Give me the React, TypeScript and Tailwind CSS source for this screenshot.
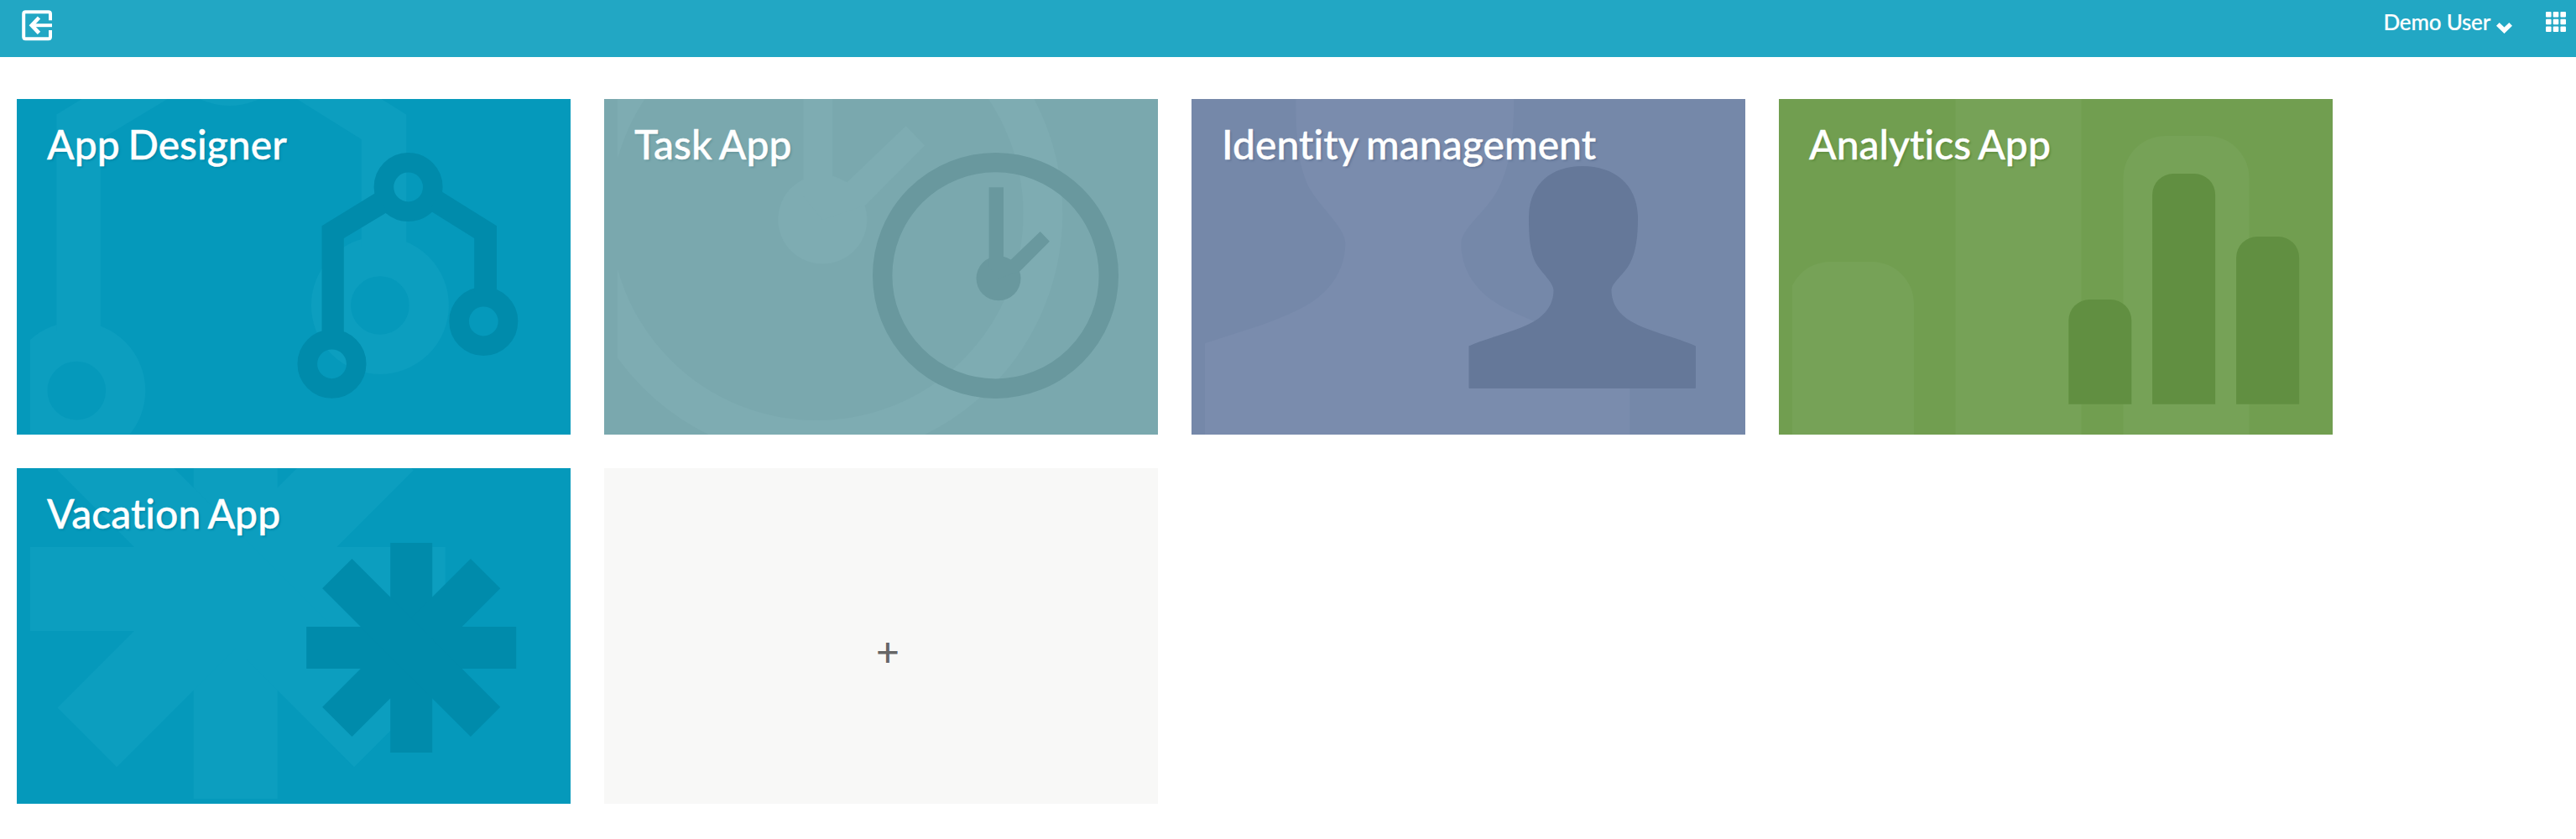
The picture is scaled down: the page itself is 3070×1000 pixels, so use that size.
import type { ReactNode } from "react";

type Tile = {
  title: string;
  bg: string;
  light: string;
  dark: string;
  shadow: string;
  icon: ReactNode;
};

const flow = (
  <>
    <g fill="none" stroke="currentColor" strokeWidth="23.6">
      <circle cx="466.6" cy="105" r="29.2" />
      <circle cx="375.5" cy="315.8" r="29.2" />
      <circle cx="556.3" cy="265" r="29.2" />
    </g>
    <path d="M363.500 280V151.300L427 112.200L442 134.600L389.800 166V280Z" />
    <path d="M545.200 230V166L492 132.800L505 109.400L572 151.300V230Z" />
  </>
);

const clock = (
  <>
    <circle cx="466.5" cy="210.4" r="134.8" fill="none" stroke="currentColor" strokeWidth="23.4" />
    <circle cx="470" cy="213.8" r="26.5" />
    <path d="M458.600 105.300H476V188L484.500 191.700L519.700 158L530.900 169.700L495.600 205.300L470 214L458.600 200Z" />
  </>
);

const person = (
  <path d="M466 80C505 80 532 103 532 142C532 165 529.5 182 523 195C516 209 500.5 219 500.5 228C500.5 239 505 252 519 262C541 277 579 284 601 294.5V344Q601 345 600 345H331.500Q330.500 345 330.500 344V294.500C352 284 391 277 413 262C427 252 431.500 239 431.500 228C431.500 219 417 207 410 195C403.500 182 402 165 402 142C402 103 427 80 466 80Z" />
);

const bars = (
  <path d="M345.300 264a25 25 0 0 1 25 -25h25a25 25 0 0 1 25 25V363.700h-75ZM445.100 114a25 25 0 0 1 25 -25h25a25 25 0 0 1 25 25V363.700h-75ZM545.100 189a25 25 0 0 1 25 -25h25a25 25 0 0 1 25 25V363.700h-75Z" />
);

const arm = { x: 445.2, y: 89, width: 50, height: 250 };
const asterisk = (
  <>
    <rect {...arm} />
    <rect {...arm} transform="rotate(45 470.2 214)" />
    <rect {...arm} transform="rotate(90 470.2 214)" />
    <rect {...arm} transform="rotate(135 470.2 214)" />
  </>
);

const tiles: Tile[] = [
  { title: "App Designer", bg: "bg-[#0599bb]", light: "text-[#0c9ebf]", dark: "text-[#008bab]", shadow: "[text-shadow:2px_2px_2px_#008bab]", icon: flow },
  { title: "Task App", bg: "bg-[#7aa8ae]", light: "text-[#7eacb2]", dark: "text-[#69989e]", shadow: "[text-shadow:2px_2px_2px_#69989e]", icon: clock },
  { title: "Identity management", bg: "bg-[#7588a9]", light: "text-[#7a8cad]", dark: "text-[#657899]", shadow: "[text-shadow:2px_2px_2px_#657899]", icon: person },
  { title: "Analytics App", bg: "bg-[#719e50]", light: "text-[#76a257]", dark: "text-[#618f41]", shadow: "[text-shadow:2px_2px_2px_#618f41]", icon: bars },
  { title: "Vacation App", bg: "bg-[#0599bb]", light: "text-[#0c9ebf]", dark: "text-[#008bab]", shadow: "[text-shadow:2px_2px_2px_#008bab]", icon: asterisk },
];

function AppTile({ title, bg, light, dark, shadow, icon }: Tile) {
  return (
    <a className={`relative block h-[400px] w-[660px] overflow-hidden ${bg}`}>
      <div className="absolute inset-y-0 left-4 right-0 overflow-hidden">
        <svg viewBox="16 0 644 400" width="644" height="400" className={light} fill="currentColor">
          <g transform="translate(-679.7 -284) scale(2)">{icon}</g>
        </svg>
      </div>
      <svg viewBox="0 0 660 400" width="660" height="400" className={`absolute inset-0 ${dark}`} fill="currentColor">
        {icon}
      </svg>
      <h3 className={`relative px-9 pt-[25px] text-[48px] leading-[58px] font-medium tracking-[0.05px] whitespace-nowrap text-white [-webkit-text-stroke:0.4px_white] [font-variant-ligatures:none] [word-spacing:-2.5px] ${shadow}`}>
        {title}
      </h3>
    </a>
  );
}

export default function App() {
  return (
    <div className="min-h-[1000px] w-full bg-white font-['Lato',sans-serif]">
      <header className="flex h-[68px] items-start justify-between bg-[#22a7c4] pl-[26px] pr-3 text-white">
        <svg width="37" height="37" viewBox="0 0 37 37" className="mt-3" fill="none" stroke="currentColor" strokeWidth="4">
          <path d="M34 12.300V4.500Q34 2.200 31.700 2.200H4.500Q2.200 2.200 2.200 4.500V32Q2.200 34.200 4.500 34.200H31.700Q34 34.200 34 32V24" />
          <path d="M36 18.200H12" />
          <path d="M20.500 9L11.800 18.200L20.500 27.400" strokeWidth="4.600" />
        </svg>
        <div className="flex items-start">
          <span className="mt-[10px] text-[26px] leading-8 font-medium tracking-[-0.2px] [-webkit-text-stroke:0.2px_white]">Demo User</span>
          <svg width="19" height="13" viewBox="0 0 19 13" className="mt-[27px] ml-[7px]" fill="currentColor">
            <path d="M0 3.700L3.700 0L9.500 5.600L15.300 0L19 3.700L9.500 13Z" />
          </svg>
          <svg width="24" height="24" viewBox="0 0 24 24" className="mt-[14px] ml-10" fill="currentColor">
            {[0, 8.7, 17.4].map((y) =>
              [0, 8.7, 17.4].map((x) => <rect key={`${x}-${y}`} x={x} y={y} width="6.6" height="6.6" rx="1" />),
            )}
          </svg>
        </div>
      </header>
      <main className="grid grid-cols-[repeat(4,660px)] gap-10 px-5 pt-[50px]">
        {tiles.map((tile) => (
          <AppTile key={tile.title} {...tile} />
        ))}
        <a className="flex h-[400px] w-[660px] items-center justify-center bg-[#f8f8f7] pt-9 pl-4 text-[48px] leading-[58px] font-medium text-[#666666]">
          +
        </a>
      </main>
    </div>
  );
}
